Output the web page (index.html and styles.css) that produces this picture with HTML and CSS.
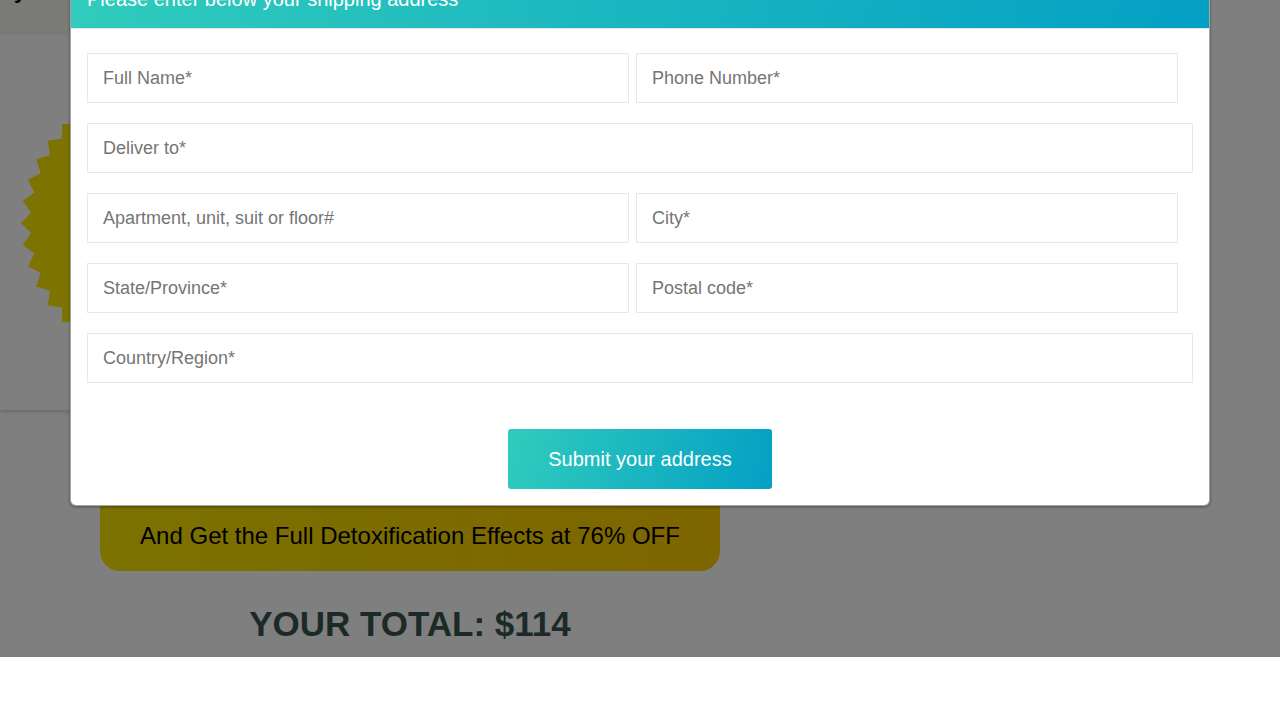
FILE: index.html
```html
<!DOCTYPE html>
<html lang="en">
<head>
<meta charset="utf-8">
<title>Shipping address</title>
<link rel="stylesheet" href="styles.css">
</head>
<body>
<div class="page">
  <main class="main-col">
    <header class="topbar"><span class="brand">y</span></header>
    <section class="card">
      <svg class="burst" width="280" height="280" viewBox="-140 -140 280 280" aria-hidden="true">
        <g fill="#fbe600">
          <rect x="-99" y="-99" width="198" height="198" transform="rotate(45)"/>
          <rect x="-99" y="-99" width="198" height="198" transform="rotate(54)"/>
          <rect x="-99" y="-99" width="198" height="198" transform="rotate(63)"/>
          <rect x="-99" y="-99" width="198" height="198" transform="rotate(72)"/>
          <rect x="-99" y="-99" width="198" height="198" transform="rotate(81)"/>
          <rect x="-99" y="-99" width="198" height="198" transform="rotate(90)"/>
          <rect x="-99" y="-99" width="198" height="198" transform="rotate(99)"/>
          <rect x="-99" y="-99" width="198" height="198" transform="rotate(108)"/>
          <rect x="-99" y="-99" width="198" height="198" transform="rotate(117)"/>
          <rect x="-99" y="-99" width="198" height="198" transform="rotate(126)"/>
        </g>
      </svg>
    </section>
    <div class="offer">
      <p class="offer-line">Upgrade Your Order Today</p>
      <p class="offer-line">And Get the Full Detoxification Effects at 76% OFF</p>
    </div>
    <h2 class="total">YOUR TOTAL: $114</h2>
  </main>

  <div class="overlay"></div>

  <div class="modal">
    <div class="modal-header">
      <h4 class="modal-title">Please enter below your shipping address</h4>
    </div>
    <form class="modal-body">
      <div class="row row-split">
        <input class="field half" type="text" placeholder="Full Name*">
        <input class="field half" type="text" placeholder="Phone Number*">
      </div>
      <div class="row">
        <input class="field" type="text" placeholder="Deliver to*">
      </div>
      <div class="row row-split">
        <input class="field half" type="text" placeholder="Apartment, unit, suit or floor#">
        <input class="field half" type="text" placeholder="City*">
      </div>
      <div class="row row-split">
        <input class="field half" type="text" placeholder="State/Province*">
        <input class="field half" type="text" placeholder="Postal code*">
      </div>
      <div class="row">
        <input class="field" type="text" placeholder="Country/Region*">
      </div>
      <div class="actions">
        <button class="submit" type="button">Submit your address</button>
      </div>
    </form>
  </div>
</div>
</body>
</html>
```

FILE: styles.css
```css
html, body {
  margin: 0;
  padding: 0;
  background: #ffffff;
}

body {
  font-family: "Liberation Sans", Arial, sans-serif;
}

.page {
  position: relative;
  height: 657px;
}

.main-col {
  width: 820px;
  display: flex;
  flex-direction: column;
}

.topbar {
  height: 35px;
  background: #f4f4ec;
  position: relative;
  overflow: hidden;
}

.brand {
  display: block;
  margin: -22px 0 0 14px;
  font-size: 22px;
  line-height: 26px;
  font-weight: bold;
  color: #000;
}

.card {
  height: 375px;
  box-sizing: border-box;
  background: #ffffff;
  padding: 48px 0 0 21px;
  box-shadow: 0 2px 4px rgba(0, 0, 0, 0.18);
}

.burst {
  display: block;
}

.offer {
  margin: 40px 100px 0;
  padding: 20px 20px 17px;
  border-radius: 0 0 20px 20px;
  background: linear-gradient(90deg, #f6e400 0%, #fccb00 100%);
  display: flex;
  flex-direction: column;
  gap: 12px;
  text-align: center;
}

.offer-line {
  margin: 0;
  font-size: 24px;
  line-height: 36px;
  color: #000;
}

.total {
  margin: 31px 0 0;
  text-align: center;
  font-size: 35px;
  line-height: 43px;
  font-weight: bold;
  color: #36544f;
}

.overlay {
  position: absolute;
  inset: 0;
  background: rgba(0, 0, 0, 0.5);
}

.modal {
  position: absolute;
  left: 70px;
  top: -31px;
  width: 1140px;
  box-sizing: border-box;
  background: #ffffff;
  border: 1px solid rgba(0, 0, 0, 0.35);
  border-radius: 6px;
  box-shadow: 0 1px 3px rgba(0, 0, 0, 0.4);
  overflow: hidden;
}

.modal-header {
  padding: 15px 16px;
  background: linear-gradient(100deg, #31ccbc 0%, #03a0c5 100%);
  border-bottom: 1px solid #e5e5e5;
}

.modal-title {
  margin: 0;
  font-size: 20px;
  line-height: 28px;
  font-weight: normal;
  color: #ffffff;
}

.modal-body {
  margin: 0;
  padding: 24px 16px 16px;
  display: flex;
  flex-direction: column;
  gap: 20px;
}

.row {
  display: flex;
}

.row-split {
  gap: 7px;
}

.field {
  flex: 1 1 auto;
  height: 50px;
  box-sizing: border-box;
  margin: 0;
  padding: 0 15px;
  border: 1px solid #e8e8e8;
  border-radius: 0;
  background: #ffffff;
  font-family: "Liberation Sans", Arial, sans-serif;
  font-size: 18px;
  color: #333;
  outline: none;
}

.field.half {
  flex: 0 0 49%;
  width: 49%;
}

.field::placeholder {
  color: #757575;
  opacity: 1;
}

.actions {
  display: flex;
  justify-content: center;
  margin-top: 26px;
}

.submit {
  width: 264px;
  height: 60px;
  border: 0;
  border-radius: 3px;
  background: linear-gradient(105deg, #31ccbc 0%, #03a0c5 100%);
  color: #ffffff;
  font-family: "Liberation Sans", Arial, sans-serif;
  font-size: 20px;
  line-height: 28px;
  padding: 0;
  cursor: pointer;
}
```
